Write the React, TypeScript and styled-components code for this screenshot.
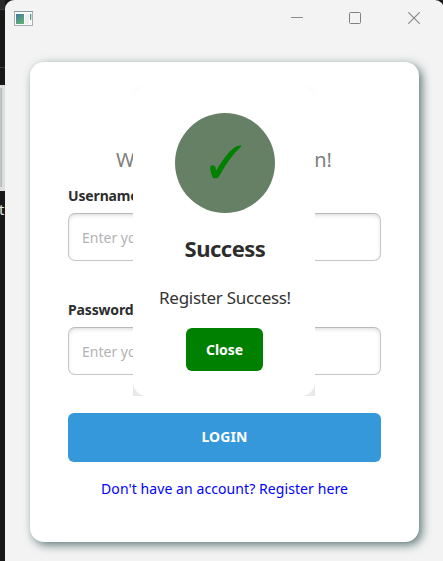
import React from "react";
import styled, { createGlobalStyle } from "styled-components";

const GlobalStyle = createGlobalStyle`
  * { box-sizing: border-box; }
  body { margin: 0; overflow: hidden; font-family: "Noto Sans", "Open Sans", sans-serif; }
`;

const Desktop = styled.div`
  position: relative;
  display: flex;
  width: 443px;
  height: 561px;
  overflow: hidden;
  background: #181818;
`;

const Backdrop = styled.div`
  display: flex;
  flex-direction: column;
  flex: none;
  width: 5px;
  height: 561px;
  overflow: hidden;
  font-size: 15px;
  line-height: 20px;
  color: #e4e4e4;
`;

const BackdropTop = styled.div`
  height: 10px;
  background: #2b2b2b;
  border-bottom: 1px solid #3c3c3c;
`;

const BackdropGap = styled.div`
  height: 75px;
  background: linear-gradient(#181818 57px, #3c3c3c 57px, #3c3c3c 58px, #181818 58px);
`;

const BackdropPanel = styled.div`
  height: 106px;
  border: solid #dedede;
  border-width: 3px 3px 4px 0;
  background: linear-gradient(90deg, #ccd1d1, #a9b0b0);
`;

const BackdropText = styled.div`
  margin: 8px 0 0 -1px;
`;

const Window = styled.div`
  flex: none;
  display: flex;
  flex-direction: column;
  width: 439px;
  height: 570px;
  border-radius: 9px;
  background: #f3f3f3;
`;

const TitleBar = styled.header`
  display: flex;
  align-items: center;
  justify-content: space-between;
  height: 36px;
  padding: 0 24px 0 9px;
`;

const Controls = styled.div`
  display: flex;
  gap: 46px;
  svg { display: block; }
  svg:last-child { margin-left: 1px; }
`;

const Card = styled.main`
  width: 389px;
  height: 480px;
  margin: 26px 0 0 25px;
  padding: 84px 38px 0;
  border-radius: 14px;
  background: #fff;
  box-shadow: 3px 3px 10px 0 rgba(47, 79, 79, 0.75);
`;

const Title = styled.h1`
  margin: 0 0 8px 48px;
  font-size: 20px;
  line-height: 28px;
  font-weight: 400;
  color: #808080;
  white-space: nowrap;
  letter-spacing: -0.22px;
`;

const Field = styled.label`
  display: block;
  height: 114px;
`;

const FieldName = styled.span`
  display: block;
  height: 31px;
  padding-top: 4px;
  font-size: 14px;
  line-height: 20px;
  font-weight: 700;
  letter-spacing: -0.15px;
  color: #2d2d2d;
`;

const Input = styled.input`
  display: block;
  width: 313px;
  height: 48px;
  padding: 0 13px;
  border: 1px solid #c6c6c6;
  border-top-color: #b9b9b9;
  border-radius: 7px;
  outline: 0;
  background: #fff;
  box-shadow: inset 0 2px 4px -1px rgba(0, 0, 0, 0.16);
  font: 400 14px "Noto Sans", sans-serif;
  &::placeholder { color: #b2b2b2; opacity: 1; }
`;

const Button = styled.button<{ $kind: "login" | "close" }>`
  display: block;
  width: ${(p) => (p.$kind === "login" ? "313px" : "77px")};
  height: ${(p) => (p.$kind === "login" ? "49px" : "43px")};
  padding: 0 0 ${(p) => (p.$kind === "login" ? "3px" : "0")};
  border: 0;
  border-radius: 6px;
  background: ${(p) => (p.$kind === "login" ? "#3498db" : "#008000")};
  color: #fff;
  font: 700 14px "Noto Sans", sans-serif;
  letter-spacing: ${(p) => (p.$kind === "login" ? "0.1px" : "-0.1px")};
`;

const LoginArea = styled.div`
  margin-top: 3px;
`;

const RegisterLink = styled.a`
  display: block;
  margin-top: 17px;
  text-align: center;
  font-size: 14px;
  line-height: 20px;
  white-space: nowrap;
  letter-spacing: 0.08px;
  color: #0000ff;
`;

const DialogFrame = styled.div`
  position: absolute;
  left: 133px;
  top: 87px;
  width: 182px;
  height: 309px;
  background: linear-gradient(#fdfdfd, #fdfdfd 40px, #fff 70px, #fff 250px, #e9e9e9 290px);
`;

const Dialog = styled.section`
  display: flex;
  flex-direction: column;
  align-items: center;
  height: 309px;
  padding: 26px 0 0 2px;
  border-radius: 14px;
  background: #fff;
`;

const Badge = styled.div`
  width: 100px;
  height: 100px;
  border-radius: 50%;
  background: #668066;
  svg { display: block; }
`;

const DialogTitle = styled.h2`
  margin: 20px 0 0;
  font-size: 22px;
  line-height: 30px;
  font-weight: 700;
  letter-spacing: -0.5px;
  color: #2d2d2d;
`;

const DialogMessage = styled.p`
  margin: 23px 0 18px;
  font-size: 17px;
  line-height: 24px;
  letter-spacing: -0.3px;
  white-space: nowrap;
  color: #333;
`;

const CloseSlot = styled.div`
  padding-right: 1px;
`;

const AppIcon = () => (
  <svg width="19" height="15" viewBox="0 0 19 15">
    <defs>
      <linearGradient id="pane" x1="0" y1="0" x2="0.5" y2="1">
        <stop offset="0" stopColor="#4279a6" />
        <stop offset="1" stopColor="#60ad74" />
      </linearGradient>
    </defs>
    <rect x="0.5" y="0.5" width="18" height="14" fill="#fafafa" stroke="#a9afb7" />
    <path d="M0 .5h19" stroke="#8796a5" />
    <rect x="2" y="3" width="8" height="10" fill="url(#pane)" />
    <rect x="11" y="3" width="4" height="10" fill="#eeeff1" />
    <rect x="16" y="3" width="1.3" height="6" fill="url(#pane)" />
  </svg>
);

export default function App() {
  return (
    <Desktop>
      <GlobalStyle />
      <Backdrop>
        <BackdropTop />
        <BackdropGap />
        <BackdropPanel />
        <BackdropText>t</BackdropText>
      </Backdrop>
      <Window>
        <TitleBar>
          <AppIcon />
          <Controls>
            <svg width="12" height="12" stroke="#8b8b8b"><path d="M0 5.5h12" /></svg>
            <svg width="12" height="12" fill="none" stroke="#808080"><rect x=".5" y=".5" width="11" height="11" rx="1" /></svg>
            <svg width="12" height="12" stroke="#858585"><path d="M.3.3l11.4 11.4M11.7.3L.3 11.7" strokeWidth="1.1" /></svg>
          </Controls>
        </TitleBar>
        <Card>
          <Title>Welcome, Please Login!</Title>
          <Field>
            <FieldName>Username</FieldName>
            <Input placeholder="Enter your username" />
          </Field>
          <Field>
            <FieldName>Password</FieldName>
            <Input type="password" placeholder="Enter your password" />
          </Field>
          <LoginArea>
            <Button $kind="login">LOGIN</Button>
            <RegisterLink>Don't have an account? Register here</RegisterLink>
          </LoginArea>
        </Card>
      </Window>
      <DialogFrame>
        <Dialog role="dialog">
          <Badge>
            <svg width="100" height="100" viewBox="0 0 100 100">
              <path
                d="M35.2 55.8c-.4-2.8 1.6-3.8 3.3-3.4 2 .4 2.3 2.2 2.7 5.4 5.3-9.5 11.2-17.8 18.2-23.3 1.8-1.4 4.1-2.1 6.5-2 .5 0 .6.6.2 1-8.8 8.500-15.8 18.300-22 29.800-1 1.800-2 2-3.900 2-2.300 0-2.700-.5-3.200-2.300-.9-2.900-1.600-5.100-1.800-7.200z"
                fill="#008000"
              />
            </svg>
          </Badge>
          <DialogTitle>Success</DialogTitle>
          <DialogMessage>Register Success!</DialogMessage>
          <CloseSlot>
            <Button $kind="close">Close</Button>
          </CloseSlot>
        </Dialog>
      </DialogFrame>
    </Desktop>
  );
}
